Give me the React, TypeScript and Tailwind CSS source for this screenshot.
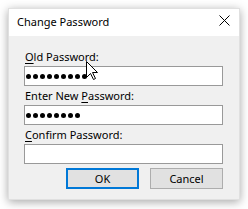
import React from "react";

const font = { fontFamily: "'Noto Sans', 'Liberation Sans', sans-serif" };

function Dots({ n }: { n: number }) {
  return (
    <div className="flex items-center gap-[2px] h-full pl-[1px]" aria-label={"•".repeat(n)}>
      {Array.from({ length: n }).map((_, i) => (
        <span key={i} className="block w-[5px] h-[5px] rounded-full bg-black" />
      ))}
    </div>
  );
}

function Field({ u, rest, pre, dots }: { u: string; rest: string; pre?: string; dots: number }) {
  return (
    <div className="flex flex-col">
      <div className="pt-[2px] pb-[2px] pl-[1px] text-[11px] leading-[15px] text-black">
        {pre}
        <span className="underline underline-offset-[2px]">{u}</span>
        {rest}
      </div>
      <div className="h-[20px] border border-[#999999] bg-white">
        {dots > 0 && <Dots n={dots} />}
      </div>
    </div>
  );
}

export default function App() {
  return (
    <div className="relative w-[248px] h-[209px] bg-white pt-[8px] pl-[8px] overflow-hidden" style={font}>
      <div className="w-[232px] h-[192px] flex flex-col shadow-[0_2px_9px_rgba(0,0,0,0.35)] border border-[rgba(0,0,0,0.12)]">
        <div className="h-[27px] bg-white flex justify-between">
          <div className="pl-[8px] pt-[5px] text-[11px] leading-[16px] text-black">Change Password</div>
          <svg className="mt-[6px] mr-[9px]" width="11" height="11" viewBox="0 0 11 11">
            <path d="M0.5 0.5 L10.5 10.5 M10.5 0.5 L0.5 10.5" stroke="#000" strokeWidth="1" />
          </svg>
        </div>
        <div className="flex-1 bg-[#f0f0f0] pt-[11px] pl-[15px] pr-[16px] flex flex-col">
          <Field u="O" rest="ld Password:" dots={9} />
          <Field pre="Enter New " u="P" rest="assword:" dots={8} />
          <Field u="C" rest="onfirm Password:" dots={0} />
          <div className="mt-[4px] flex justify-end gap-[11px]">
            <button className="w-[73px] h-[21px] border-2 border-[#0078d7] bg-[#e1e1e1] text-[11px] leading-[15px] text-black">
              OK
            </button>
            <button className="w-[73px] h-[21px] border border-[#adadad] bg-[#e1e1e1] text-[11px] leading-[15px] text-black">
              Cancel
            </button>
          </div>
        </div>
      </div>
      <svg className="absolute left-[86px] top-[61px]" width="13" height="20" viewBox="0 0 13 20">
        <path d="M0.5 0.5 L0.5 16.5 L4.5 12.5 L7.5 18.5 L9.5 17.5 L6.5 11.5 L11.5 11.5 Z" fill="#fff" stroke="#000" strokeWidth="1" strokeLinejoin="miter" />
      </svg>
    </div>
  );
}
